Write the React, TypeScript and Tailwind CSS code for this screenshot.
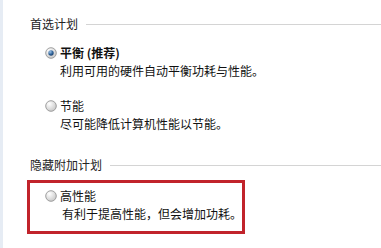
import React from 'react';

const font = { fontFamily: '"Noto Sans CJK SC", "Microsoft YaHei", sans-serif' };

function Radio({ checked }: { checked?: boolean }) {
  return (
    <svg width="12" height="12" viewBox="0 0 12 12" className="shrink-0">
      <defs>
        <radialGradient id="rb" cx="0.35" cy="0.3" r="0.8">
          <stop offset="0" stopColor="#ffffff" />
          <stop offset="1" stopColor="#c4c4c4" />
        </radialGradient>
        <radialGradient id="dot" cx="0.35" cy="0.3" r="0.8">
          <stop offset="0" stopColor="#9cc2e8" />
          <stop offset="0.6" stopColor="#2c5f95" />
          <stop offset="1" stopColor="#1b3c66" />
        </radialGradient>
      </defs>
      <circle cx="6" cy="6" r="5.3" fill="url(#rb)" stroke="#969696" strokeWidth="0.9" />
      {checked && <circle cx="6" cy="6" r="2.7" fill="url(#dot)" />}
    </svg>
  );
}

function Heading({ text }: { text: string }) {
  return (
    <div className="flex items-center h-4 pl-[3px]">
      <span className="text-[12px] leading-4 text-[#222]">{text}</span>
      <div className="flex-1 h-px bg-[#d4d4d4] ml-2" />
    </div>
  );
}

function Plan({ title, desc, checked, bold, descPad = 'pl-[33px]' }: { title: string; desc: string; checked?: boolean; bold?: boolean; descPad?: string }) {
  return (
    <div>
      <div className="flex items-center h-4 pl-[18px] gap-[3px]">
        <Radio checked={checked} />
        <span className={`text-[12px] leading-4 text-[#111] ${bold ? 'font-bold' : ''}`}>{title}</span>
      </div>
      <div className={`mt-[2px] text-[12px] leading-4 text-[#111] ${descPad}`}>{desc}</div>
    </div>
  );
}

export default function App() {
  return (
    <div className="w-[381px] h-[248px] bg-white flex overflow-hidden" style={font}>
      <div className="w-[3px] bg-[#e6ecf4]" />
      <div className="flex-1 pl-[24px] pt-[16px]">
        <Heading text="首选计划" />
        <div className="mt-[13px]">
          <Plan title="平衡 (推荐)" desc="利用可用的硬件自动平衡功耗与性能。" checked bold />
        </div>
        <div className="mt-[19px]">
          <Plan title="节能" desc="尽可能降低计算机性能以节能。" />
        </div>
        <div className="mt-[25px]">
          <Heading text="隐藏附加计划" />
        </div>
        <div className="mt-[7px] w-[218px] h-[54px] border-[3px] border-[#c1232b] pt-[5px]">
          <div className="-ml-[3px]">
            <Plan title="高性能" desc="有利于提高性能，但会增加功耗。" descPad="pl-[35px]" />
          </div>
        </div>
      </div>
    </div>
  );
}
